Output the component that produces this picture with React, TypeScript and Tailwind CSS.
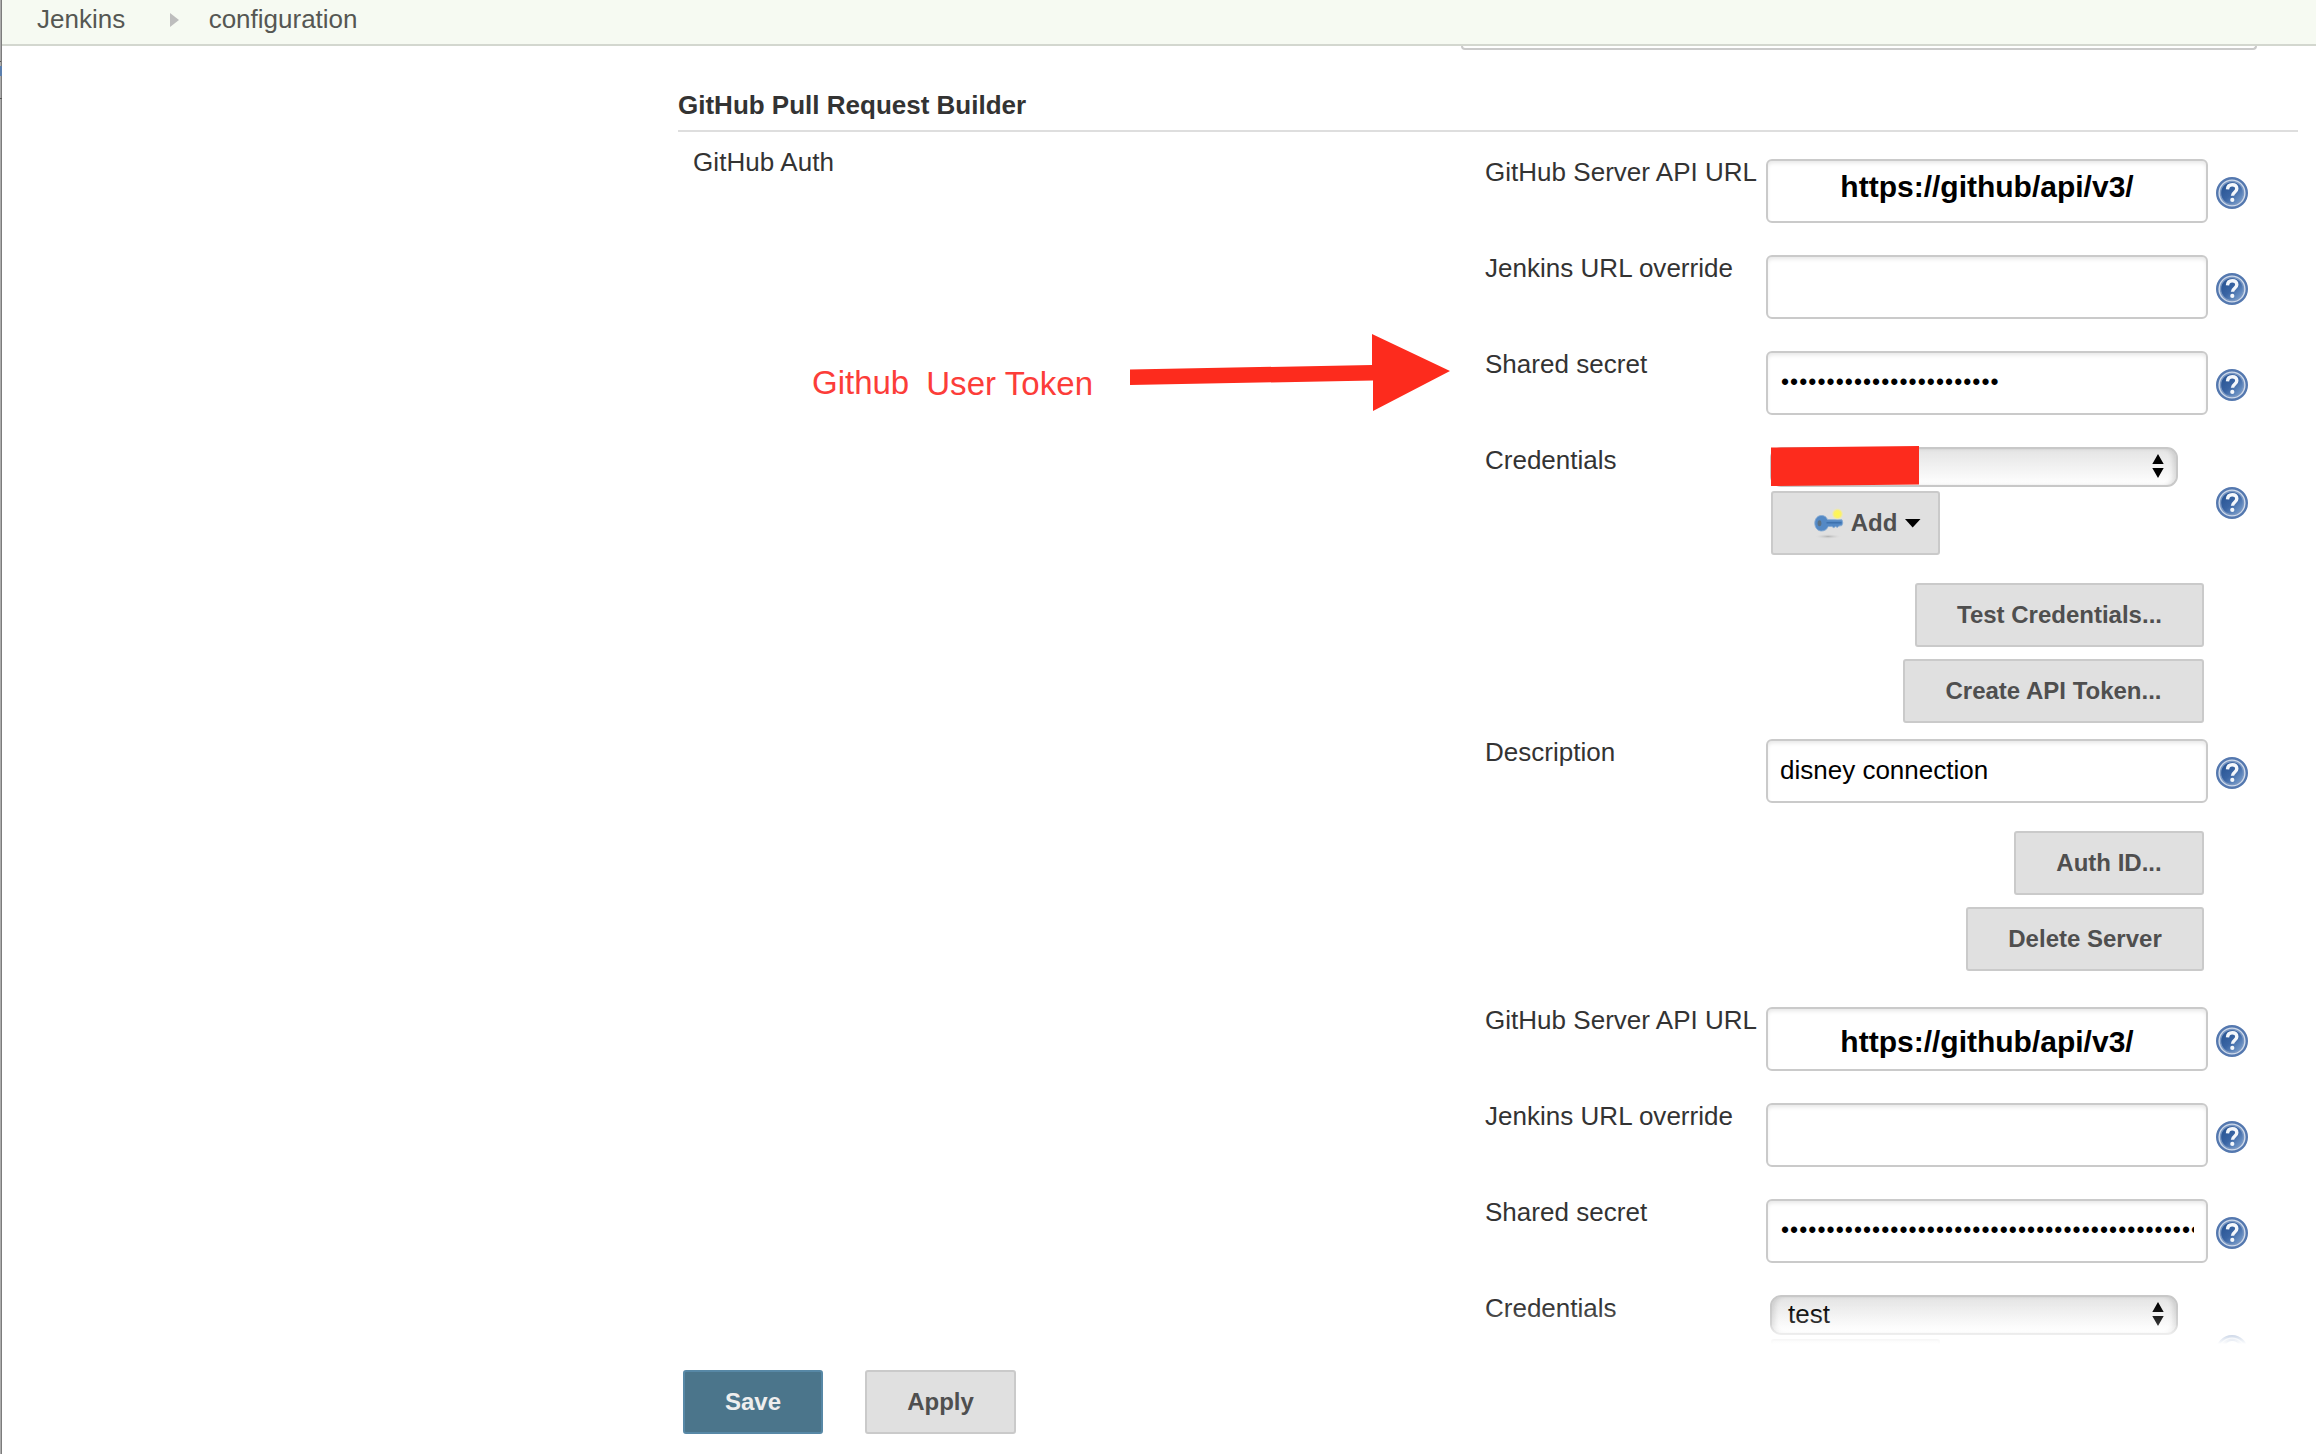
import type { ReactNode } from "react";

function HelpIcon({ className = "" }: { className?: string }) {
  return (
    <svg viewBox="0 0 32 32" className={`h-8 w-8 shrink-0 ${className}`}>
      <defs>
        <linearGradient id="help" x1="0" y1="0" x2="1" y2="1">
          <stop offset="0" stopColor="#24508f" />
          <stop offset="0.5" stopColor="#3a65a4" />
          <stop offset="1" stopColor="#86aad6" />
        </linearGradient>
      </defs>
      <circle cx="16" cy="16" r="14.8" fill="#cfdaea" stroke="#5478af" strokeWidth="2.400" />
      <circle cx="16" cy="16" r="11.5" fill="url(#help)" stroke="#7896c2" strokeWidth="1.400" />
      <path
        d="M11.500 12.400c.2-3.200 2-4.600 4.700-4.600 2.900 0 4.600 1.600 4.600 4 0 3.400-4.300 3.500-4.300 6.900"
        fill="none"
        stroke="#f4f7fb"
        strokeWidth="3.400"
      />
      <circle cx="16.300" cy="22.900" r="2.100" fill="#f4f7fb" />
    </svg>
  );
}

function KeyIcon() {
  return (
    <svg viewBox="0 0 32 32" className="h-8 w-8 shrink-0">
      <defs>
        <radialGradient id="spark">
          <stop offset="0" stopColor="#fff94a" />
          <stop offset="0.6" stopColor="#fbf16a" />
          <stop offset="1" stopColor="#f3ecaa" stopOpacity="0" />
        </radialGradient>
        <radialGradient id="shade">
          <stop offset="0" stopColor="#b4b4b4" />
          <stop offset="1" stopColor="#d8d8d8" stopOpacity="0" />
        </radialGradient>
      </defs>
      <ellipse cx="16" cy="29.500" rx="13" ry="2.400" fill="url(#shade)" />
      <path
        d="M9.500 8.500c3 0 5.200 1.600 6 4.200l14.500.1.800 3.200-1 2.600-3 .5-1.500 1.300-1.800-1-1.700 1.300-2-1.300-3.600.1C15.100 22.300 12.700 24 9.500 24c-4 0-6.700-3.500-6.700-7.800S5.500 8.500 9.500 8.500z"
        fill="#5489c5"
        stroke="#86aad3"
        strokeWidth="0.900"
      />
      <path d="M14.500 15.800h15" stroke="#3d70ac" strokeWidth="1.400" />
      <ellipse cx="7.500" cy="16.300" rx="1.900" ry="3" fill="#5b7184" />
      <circle cx="25.500" cy="7" r="6" fill="url(#spark)" />
    </svg>
  );
}

function Button({ children, className = "" }: { children: ReactNode; className?: string }) {
  return (
    <button
      className={`flex h-16 shrink-0 items-center justify-center rounded-[3px] border-2 border-[#cacaca] bg-[#e0e0e0] text-2xl font-bold whitespace-nowrap text-[#4f4f4f] ${className}`}
    >
      {children}
    </button>
  );
}

function Row({ label, children }: { label: string; children?: ReactNode }) {
  return (
    <div className="flex h-24 items-start">
      <div className="w-[281px] shrink-0 leading-8 tracking-[0.020px] whitespace-nowrap">{label}</div>
      <div className="mt-[3px] flex h-16 w-[442px] items-center overflow-hidden rounded-[6px] border-2 border-[#cacaca] bg-white px-3 pb-[2px] whitespace-nowrap text-black shadow-[inset_0_3px_4px_-1px_rgba(0,0,0,0.1)]">
        {children}
      </div>
      <HelpIcon className="mt-[21px] ml-2" />
    </div>
  );
}

function Secret({ count }: { count: number }) {
  return (
    <span className="overflow-hidden pl-[1px] text-[23px] leading-[30px] tracking-[1.060px]">
      {"•".repeat(count)}
    </span>
  );
}

function Url({ className = "" }: { className?: string }) {
  return <span className={`w-full text-center text-[30px] font-bold ${className}`}>https://github/api/v3/</span>;
}

function Credentials({ value, redacted }: { value?: string; redacted?: boolean }) {
  return (
    <div className="flex items-start">
      <div className="w-[281px] shrink-0 leading-8">Credentials</div>
      <div className="mt-[3px] ml-1 w-[438px]">
        <div className="relative flex h-10 w-[408px] items-center justify-between rounded-[11px] border-2 border-[#c8c8c8] bg-linear-to-b from-[#e4e4e4] to-white pr-3 pb-[2px] pl-4 text-black shadow-[inset_-5px_0_5px_-2px_rgba(0,0,0,0.12),inset_5px_0_5px_-2px_rgba(0,0,0,0.12)]">
          <span>{value}</span>
          <svg viewBox="0 0 12 24" className="h-6 w-3">
            <path d="M6 0l5.700 10H.3zM6 24l5.700-10H.3z" fill="#000" />
          </svg>
          {redacted && (
            <svg viewBox="0 0 150 40" className="absolute -top-[3px] -left-[1px] h-10 w-[150px]">
              <path d="M0 1.500L148 0v38.500L0 40z" fill="#fd2b1d" />
            </svg>
          )}
        </div>
        <Button className="mt-1 ml-[1px] w-[169px] pl-[22px]">
          <KeyIcon />
          <span className="ml-[7px]">Add</span>
          <svg viewBox="0 0 16 9" className="ml-2 h-[9px] w-4">
            <path d="M0 0h15.500L7.700 8.500z" fill="#000" />
          </svg>
        </Button>
      </div>
      <HelpIcon className="mt-[43px] ml-2" />
    </div>
  );
}

export default function App() {
  return (
    <div className="relative flex h-[1454px] w-[2316px] overflow-hidden bg-white font-['Liberation_Sans',Arial,sans-serif] text-[26px] text-[#333]">
      <div className="w-[2px] shrink-0 border-r border-[#7c7c7c] bg-[#acacac]">
        <div className="mt-[61px] h-px bg-[#555]" />
        <div className="mt-1 h-[10px] w-[2px] bg-[#5b7fae]" />
        <div className="mt-[22px] h-px w-[2px] bg-[#555]" />
      </div>
      <div className="flex min-w-0 flex-1 flex-col">
        <header className="flex h-[46px] shrink-0 items-center border-b-2 border-[#d3d7cf] bg-[#f6faf2] pb-[5px] pl-[35px] text-[#555753]">
          <span>Jenkins</span>
          <svg viewBox="0 0 9 14" className="ml-[45px] h-[14px] w-[9px]">
            <path d="M0 0l9 7-9 7z" fill="#bdbdbd" />
          </svg>
          <span className="ml-[29.500px]">configuration</span>
        </header>

        <main className="relative h-[1298px] shrink-0 overflow-hidden pl-[676px]">
          <div className="ml-[783px] h-1 w-[796px] rounded-b-[5px] border-2 border-t-0 border-[#cacaca]" />
          <h2 className="mt-[38px] flex h-11 w-[1620px] items-start border-b-2 border-[#dedede] leading-[34px] font-bold">
            GitHub Pull Request Builder
          </h2>
          <div className="flex">
            <div className="w-[807px] shrink-0 pt-[14px] pl-[15px] leading-8 tracking-[0.080px]">GitHub Auth</div>
            <div className="flex w-[763px] flex-col pt-6">
              <Row label="GitHub Server API URL">
                <Url className="-mt-[8px]" />
              </Row>
              <Row label="Jenkins URL override" />
              <Row label="Shared secret">
                <Secret count={24} />
              </Row>
              <Credentials redacted />
              <div className="mt-7 flex w-[719px] flex-col items-end gap-3">
                <Button className="w-[289px]">Test Credentials...</Button>
                <Button className="w-[301px]">Create API Token...</Button>
              </div>
              <div className="mt-[13px]">
                <Row label="Description">disney connection</Row>
              </div>
              <div className="-mt-[1px] flex w-[719px] flex-col items-end gap-3">
                <Button className="w-[190px]">Auth ID...</Button>
                <Button className="w-[238px]">Delete Server</Button>
              </div>
              <div className="mt-[33px]">
                <Row label="GitHub Server API URL">
                  <Url className="mt-[7px]" />
                </Row>
                <Row label="Jenkins URL override" />
                <Row label="Shared secret">
                  <Secret count={46} />
                </Row>
                <Credentials value="test" />
              </div>
            </div>
          </div>
          <div className="absolute inset-x-0 bottom-0 h-10 bg-[linear-gradient(to_bottom,rgba(255,255,255,0)_0%,rgba(255,255,255,0.2)_50%,rgba(255,255,255,0.68)_75%,rgba(255,255,255,1)_100%)]" />
        </main>

        <footer className="flex flex-1 items-start gap-[42px] bg-white pt-[26px] pl-[681px]">
          <button className="flex h-16 w-[140px] items-center justify-center rounded-[3px] border-2 border-[#5788a6] bg-[#4b758b] text-2xl font-bold text-[#eeeeee]">
            Save
          </button>
          <Button className="w-[151px]">Apply</Button>
        </footer>
      </div>

      <div className="absolute top-[364px] left-[812px] flex text-[33px] leading-[38px] whitespace-nowrap text-[#fc3d39]">
        <span>Github</span>
        <span className="mt-px ml-[17px] tracking-[0.050px]">User Token</span>
      </div>
      <svg viewBox="0 0 320 78" className="absolute top-[334px] left-[1130px] h-[78px] w-[320px]">
        <path d="M0 35.500L242 31V0l78 37-77 40V46.500L0 51z" fill="#fd2b1d" />
      </svg>
    </div>
  );
}
